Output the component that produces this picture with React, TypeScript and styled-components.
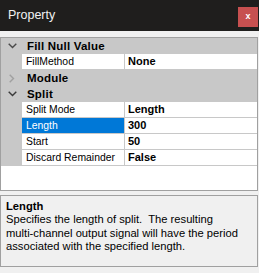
import styled, { createGlobalStyle } from "styled-components";

const GlobalStyle = createGlobalStyle`
  body {
    margin: 0;
    background: #f0f0f0;
    font-family: "Liberation Sans", Arial, sans-serif;
  }
`;

const Panel = styled.div`
  width: 259px;
  height: 273px;
  display: flex;
  flex-direction: column;
  background: #f0f0f0;
`;

const TitleBar = styled.div`
  height: 31px;
  background: #1f1e1d;
  display: flex;
  align-items: center;
  justify-content: space-between;
  padding: 0 1px 0 8px;
  box-sizing: border-box;
`;

const Title = styled.span`
  color: #f2f2f2;
  font-size: 12.5px;
  padding-bottom: 1px;
`;

const CloseButton = styled.div`
  width: 20px;
  height: 20px;
  margin-top: 2px;
  background: #c75050;
  color: #fff;
  font-size: 9px;
  font-weight: bold;
  display: flex;
  align-items: center;
  justify-content: center;
  padding-bottom: 2px;
  box-sizing: border-box;
`;

const Body = styled.div`
  display: flex;
  flex-direction: column;
  gap: 4px;
  padding: 6px 1px 0 0;
`;

const Grid = styled.div`
  height: 154px;
  box-sizing: border-box;
  border: 1px solid #a0a0a0;
  background: #fff;
`;

const CategoryRow = styled.div`
  height: 16px;
  background: #c8c8c8;
  display: grid;
  grid-template-columns: 21px 1fr;
  align-items: center;
  font-size: 11.5px;
  font-weight: bold;
  line-height: 16px;
  color: #000;
`;

const Chevron = styled.div`
  display: flex;
  align-items: center;
  justify-content: center;
  height: 16px;
  padding-left: 1px;
`;

const CategoryLabel = styled.span`
  padding-left: 5px;
  letter-spacing: 0.2px;
`;

const PropRow = styled.div`
  height: 16px;
  display: grid;
  grid-template-columns: 21px 103px 1fr;
`;

const Margin = styled.div`
  background: #c8c8c8;
`;

const NameCell = styled.div<{ $selected?: boolean }>`
  border-right: 1px solid #c8c8c8;
  border-bottom: 1px solid #c8c8c8;
  background: ${(p) => (p.$selected ? "#0078d7" : "#fff")};
  color: ${(p) => (p.$selected ? "#fff" : "#000")};
  font-size: 10.4px;
  line-height: 15px;
  padding-left: 4px;
  white-space: nowrap;
  overflow: hidden;
`;

const ValueCell = styled.div`
  border-bottom: 1px solid #c8c8c8;
  font-size: 11px;
  font-weight: bold;
  line-height: 15px;
  padding-left: 3px;
  color: #000;
`;

const Description = styled.div`
  height: 72px;
  box-sizing: border-box;
  border: 1px solid #a0a0a0;
  background: #f0f0f0;
  padding: 4px 5px;
  font-size: 11.2px;
  line-height: 13.4px;
  color: #000;
`;

const DescTitle = styled.div`
  font-weight: bold;
`;

const DescText = styled.div`
  white-space: pre-line;
`;

function ChevronIcon({ open, color }: { open: boolean; color: string }) {
  return open ? (
    <svg width="9" height="6" viewBox="0 0 9 6">
      <polyline points="0.7,0.7 4.5,4.5 8.3,0.7" fill="none" stroke={color} strokeWidth="1.4" />
    </svg>
  ) : (
    <svg width="6" height="9" viewBox="0 0 6 9">
      <polyline points="0.7,0.7 4.5,4.5 0.7,8.3" fill="none" stroke={color} strokeWidth="1.4" />
    </svg>
  );
}

type Item =
  | { kind: "cat"; label: string; open: boolean; color: string }
  | { kind: "prop"; name: string; value: string; selected?: boolean };

const items: Item[] = [
  { kind: "cat", label: "Fill Null Value", open: true, color: "#4a4a4a" },
  { kind: "prop", name: "FillMethod", value: "None" },
  { kind: "cat", label: "Module", open: false, color: "#a0a0a0" },
  { kind: "cat", label: "Split", open: true, color: "#3a3a3a" },
  { kind: "prop", name: "Split Mode", value: "Length" },
  { kind: "prop", name: "Length", value: "300", selected: true },
  { kind: "prop", name: "Start", value: "50" },
  { kind: "prop", name: "Discard Remainder", value: "False" },
];

function App() {
  return (
    <>
      <GlobalStyle />
      <Panel>
        <TitleBar>
          <Title>Property</Title>
          <CloseButton>x</CloseButton>
        </TitleBar>
        <Body>
          <Grid>
            {items.map((it) =>
              it.kind === "cat" ? (
                <CategoryRow key={it.label}>
                  <Chevron>
                    <ChevronIcon open={it.open} color={it.color} />
                  </Chevron>
                  <CategoryLabel>{it.label}</CategoryLabel>
                </CategoryRow>
              ) : (
                <PropRow key={it.name}>
                  <Margin />
                  <NameCell $selected={it.selected}>{it.name}</NameCell>
                  <ValueCell>{it.value}</ValueCell>
                </PropRow>
              )
            )}
          </Grid>
          <Description>
            <DescTitle>Length</DescTitle>
            <DescText>
              {"Specifies the length of split.\u00a0 The resulting\nmulti-channel output signal will have the period\nassociated with the specified length."}
            </DescText>
          </Description>
        </Body>
      </Panel>
    </>
  );
}

export default App;
